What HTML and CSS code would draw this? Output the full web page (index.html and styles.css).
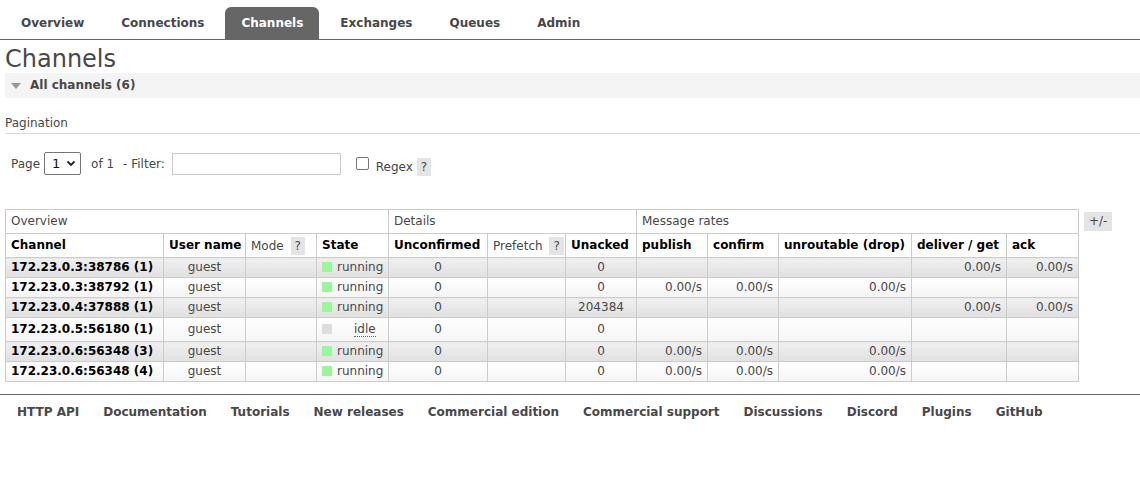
FILE: index.html
```html
<!DOCTYPE html>
<html>
<head>
<meta charset="utf-8">
<link rel="stylesheet" href="styles.css">
</head>
<body>
<div class="menu">
  <ul class="tabs">
    <li><a>Overview</a></li>
    <li><a>Connections</a></li>
    <li class="active"><a>Channels</a></li>
    <li><a>Exchanges</a></li>
    <li><a>Queues</a></li>
    <li><a>Admin</a></li>
  </ul>
</div>
<div class="main">
  <h1>Channels</h1>
  <div class="section-head"><span class="tri"></span>All channels (6)</div>
  <h3 class="pag-title">Pagination</h3>
  <div class="pager">
    <span>Page</span>
    <span class="select">1 <svg width="10" height="7" viewBox="0 0 10 7"><path d="M1.5 1.5 L5 5 L8.5 1.5" fill="none" stroke="#222" stroke-width="1.8"/></svg></span>
    <span class="of">of 1</span>
    <span>- Filter:</span>
    <span class="input"></span>
    <span class="check"></span>
    <span class="regex">Regex</span>
    <span class="help">?</span>
  </div>

  <div class="table-wrap">
    <table class="list">
      <colgroup>
        <col style="width:158px"><col style="width:82px"><col style="width:71px"><col style="width:72px">
        <col style="width:99px"><col style="width:78px"><col style="width:71px">
        <col style="width:71px"><col style="width:71px"><col style="width:133px"><col style="width:95px"><col style="width:72px">
      </colgroup>
      <thead>
        <tr class="group">
          <th colspan="4">Overview</th>
          <th colspan="3">Details</th>
          <th colspan="5">Message rates</th>
        </tr>
        <tr class="cols">
          <th>Channel</th>
          <th>User name</th>
          <th class="plain">Mode <span class="help">?</span></th>
          <th>State</th>
          <th>Unconfirmed</th>
          <th class="plain">Prefetch <span class="help">?</span></th>
          <th>Unacked</th>
          <th>publish</th>
          <th>confirm</th>
          <th>unroutable (drop)</th>
          <th>deliver / get</th>
          <th>ack</th>
        </tr>
      </thead>
      <tbody>
        <tr class="alt1">
          <td class="name">172.23.0.3:38786 (1)</td><td class="c">guest</td><td></td>
          <td><span class="st run"></span>running</td>
          <td class="c">0</td><td></td><td class="c">0</td>
          <td></td><td></td><td></td><td class="r">0.00/s</td><td class="r">0.00/s</td>
        </tr>
        <tr class="alt2">
          <td class="name">172.23.0.3:38792 (1)</td><td class="c">guest</td><td></td>
          <td><span class="st run"></span>running</td>
          <td class="c">0</td><td></td><td class="c">0</td>
          <td class="r">0.00/s</td><td class="r">0.00/s</td><td class="r">0.00/s</td><td></td><td></td>
        </tr>
        <tr class="alt1">
          <td class="name">172.23.0.4:37888 (1)</td><td class="c">guest</td><td></td>
          <td><span class="st run"></span>running</td>
          <td class="c">0</td><td></td><td class="c">204384</td>
          <td></td><td></td><td></td><td class="r">0.00/s</td><td class="r">0.00/s</td>
        </tr>
        <tr class="alt2 tall">
          <td class="name">172.23.0.5:56180 (1)</td><td class="c">guest</td><td></td>
          <td><span class="st idle"></span><abbr class="idle-t">idle</abbr></td>
          <td class="c">0</td><td></td><td class="c">0</td>
          <td></td><td></td><td></td><td></td><td></td>
        </tr>
        <tr class="alt1">
          <td class="name">172.23.0.6:56348 (3)</td><td class="c">guest</td><td></td>
          <td><span class="st run"></span>running</td>
          <td class="c">0</td><td></td><td class="c">0</td>
          <td class="r">0.00/s</td><td class="r">0.00/s</td><td class="r">0.00/s</td><td></td><td></td>
        </tr>
        <tr class="alt2">
          <td class="name">172.23.0.6:56348 (4)</td><td class="c">guest</td><td></td>
          <td><span class="st run"></span>running</td>
          <td class="c">0</td><td></td><td class="c">0</td>
          <td class="r">0.00/s</td><td class="r">0.00/s</td><td class="r">0.00/s</td><td></td><td></td>
        </tr>
      </tbody>
    </table>
    <span class="plusminus">+/-</span>
  </div>
</div>
<div class="footer">
  <ul>
    <li>HTTP API</li>
    <li>Documentation</li>
    <li>Tutorials</li>
    <li>New releases</li>
    <li>Commercial edition</li>
    <li>Commercial support</li>
    <li>Discussions</li>
    <li>Discord</li>
    <li>Plugins</li>
    <li>GitHub</li>
  </ul>
</div>
</body>
</html>
```

FILE: styles.css
```css
* { box-sizing: border-box; }
body {
  margin: 0;
  font: 12px "DejaVu Sans", Verdana, sans-serif;
  color: #484848;
  background: #fff;
}
ul { list-style: none; margin: 0; padding: 0; }

.menu {
  padding: 7px 0 0 5px;
  border-bottom: 1px solid #666;
}
.tabs { display: flex; gap: 5px; }
.tabs li a {
  display: block;
  height: 32px;
  line-height: 33px;
  padding: 0 16px;
  font-weight: bold;
  font-size: 12px;
  color: #484848;
  border-radius: 6px 6px 0 0;
}
.tabs li.active a { background: #666; color: #fff; }

.main { padding: 0 5px; }
h1 {
  margin: 5px 0 0;
  font-size: 24px;
  font-weight: normal;
  line-height: 28px;
  color: #484848;
}
.section-head {
  height: 25px;
  line-height: 25px;
  background: #f4f4f4;
  font-weight: bold;
  padding-left: 6px;
  display: flex;
  align-items: center;
  margin-right: -5px;
}
.tri {
  width: 0; height: 0;
  border-left: 5px solid transparent;
  border-right: 5px solid transparent;
  border-top: 6px solid #999;
  margin-right: 9px;
}
.pag-title {
  margin: 18px -5px 0 0;
  font-size: 12px;
  font-weight: normal;
  line-height: 15px;
  padding-bottom: 2px;
  border-bottom: 1px solid #ddd;
}
.pager {
  display: flex;
  align-items: center;
  padding: 18px 0 0 6px;
  height: 41px;
}
.select {
  display: inline-flex;
  align-items: center;
  gap: 6px;
  margin-left: 4px;
  width: 37px;
  height: 23px;
  border: 1px solid #767676;
  border-radius: 2px;
  padding-left: 7px;
  color: #111;
  font-size: 13px;
}
.of { margin-left: 10px; margin-right: 9px; }
.input {
  display: inline-block;
  margin-left: 7px;
  width: 169px;
  height: 22px;
  border: 1px solid #ccc;
}
.check {
  display: inline-block;
  width: 13px; height: 13px;
  border: 1px solid #767676;
  border-radius: 2px;
  margin-left: 15px;
}
.regex { margin-left: 7px; margin-top: 6px; }
.help {
  display: inline-block;
  background: #e4e4e4;
  padding: 0 4px;
  line-height: 18px;
  color: #484848;
}
.pager .help { margin-left: 4px; margin-top: 6px; }

.table-wrap {
  display: flex;
  align-items: flex-start;
  margin-top: 34px;
}
table.list {
  border-collapse: collapse;
  table-layout: fixed;
  width: 1073px;
}
table.list th, table.list td {
  border: 1px solid #ccc;
  padding: 2px 5px;
  line-height: 15px;
  white-space: nowrap;
  overflow: hidden;
}
table.list th {
  text-align: left;
  padding: 4px 5px;
  background: #fff;
}
tr.group th { font-weight: normal; }
tr.cols th { color: #000; }
tr.cols th.plain { font-weight: normal; color: #484848; padding-top: 2px; padding-bottom: 2px; }
th .help { margin-left: 3px; }
td.name { font-weight: bold; color: #000; }
td.c { text-align: center; }
td.r { text-align: right; }
tr.alt1 td { background: linear-gradient(#f0f0f0, #e0e0e0); }
tr.alt2 td { background: linear-gradient(#fff, #f4f4f4); }
tr.tall td { padding-top: 4px; padding-bottom: 4px; }
.st {
  display: inline-block;
  width: 10px; height: 10px;
  vertical-align: -1px;
  margin-right: 5px;
}
.st.run { background: #98f898; }
.st.idle { background: #ddd; margin-right: 22px; }
.idle-t {
  text-decoration: none;
  border-bottom: 1px dotted #666;
}
.plusminus {
  margin: 3px 0 0 5px;
  background: #e4e4e4;
  padding: 0 5px;
  line-height: 19px;
  color: #484848;
}

.footer {
  margin-top: 12px;
  border-top: 1px solid #666;
  padding: 9px 0 0 17px;
}
.footer ul { display: flex; gap: 24px; }
.footer li { font-weight: bold; line-height: 17px; }
```
